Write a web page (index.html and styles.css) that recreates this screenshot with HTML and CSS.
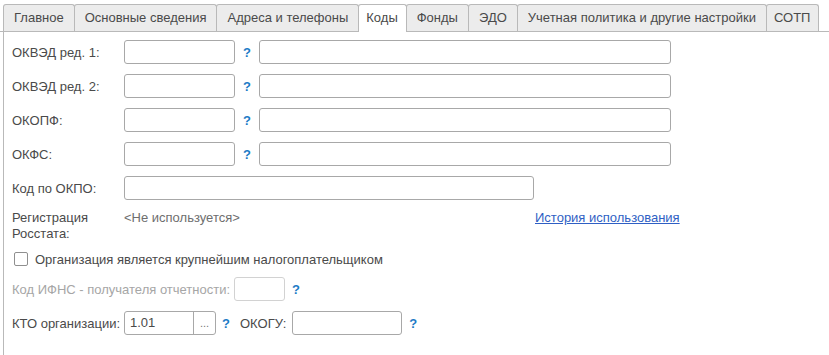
FILE: index.html
```html
<!DOCTYPE html>
<html>
<head>
<title>Коды организации</title>
<link rel="stylesheet" href="styles.css">
</head>
<body>

  <div class="tabs">
    <div class="tab">Главное</div>
    <div class="tab">Основные сведения</div>
    <div class="tab">Адреса и телефоны</div>
    <div class="tab active narrow">Коды</div>
    <div class="tab">Фонды</div>
    <div class="tab">ЭДО</div>
    <div class="tab">Учетная политика и другие настройки</div>
    <div class="tab narrow">СОТП</div>
  </div>

  <div class="panel">
    <div class="row">
      <label class="label">ОКВЭД ред. 1:</label>
      <input class="field short" type="text">
      <span class="help">?</span>
      <input class="field long" type="text">
    </div>
    <div class="row">
      <label class="label">ОКВЭД ред. 2:</label>
      <input class="field short" type="text">
      <span class="help">?</span>
      <input class="field long" type="text">
    </div>
    <div class="row">
      <label class="label">ОКОПФ:</label>
      <input class="field short" type="text">
      <span class="help">?</span>
      <input class="field long" type="text">
    </div>
    <div class="row">
      <label class="label">ОКФС:</label>
      <input class="field short" type="text">
      <span class="help">?</span>
      <input class="field long" type="text">
    </div>
    <div class="row">
      <label class="label">Код по ОКПО:</label>
      <input class="field okpo" type="text">
    </div>

    <div class="row reg-row">
      <div class="label">Регистрация<br>Росстата:</div>
      <div class="reg-value">&lt;Не используется&gt;</div>
      <a class="link" href="#">История использования</a>
    </div>

    <div class="row check-row">
      <span class="checkbox"></span>
      <span class="check-text">Организация является крупнейшим налогоплательщиком</span>
    </div>

    <div class="row">
      <label class="label disabled">Код ИФНС - получателя отчетности:</label>
      <input class="field ifns" type="text" disabled>
      <span class="help small">?</span>
    </div>

    <div class="row">
      <label class="label">КТО организации:</label>
      <div class="field kto">
        <span class="kto-value">1.01</span>
        <span class="kto-btn">...</span>
      </div>
      <span class="help kto-help">?</span>
      <label class="okogu-label">ОКОГУ:</label>
      <input class="field okogu" type="text">
      <span class="help small">?</span>
    </div>
  </div>

</body>
</html>
```

FILE: styles.css
```css
:root {
  --text-color: #4a4a4a;
  --muted-text: #a6a6a6;
  --tab-bg: #ececec;
  --tab-border: #b9b9b9;
  --field-border: #a8a8a8;
  --help-blue: #1d7bc6;
  --link-blue: #2f5fc4;
}

body {
  margin: 0;
  font-family: "Liberation Sans", Arial, sans-serif;
  font-size: 13px;
  color: var(--text-color);
  background: #ffffff;
  height: 355px;
  overflow: hidden;
}

/* Tab strip */
.tabs {
  display: flex;
  padding: 4px 0 0 3px;
  border-bottom: 1px solid var(--tab-border);
  height: 27px;
}

.tab {
  height: 26px;
  line-height: 26px;
  padding: 0 10px;
  background: var(--tab-bg);
  border: 1px solid var(--tab-border);
  border-bottom: none;
  border-radius: 3px 3px 0 0;
  margin-right: -1px;
  white-space: nowrap;
}

.tab.narrow {
  padding: 0 8px 0 7px;
}

.tab.active {
  background: #ffffff;
  height: 27px;
  position: relative;
  z-index: 1;
}

/* Panel body */
.panel {
  margin-left: 3px;
  border-left: 1px solid var(--tab-border);
  padding: 8px 0 0 8px;
  height: 315px;
}

.row {
  display: flex;
  align-items: center;
  height: 24px;
  margin-bottom: 10px;
}

.label {
  width: 112px;
  flex-shrink: 0;
}

.label.disabled {
  width: auto;
  color: var(--muted-text);
  margin-right: 4px;
}

.field {
  box-sizing: border-box;
  height: 24px;
  border: 1px solid var(--field-border);
  border-radius: 3px;
  background: #ffffff;
  margin: 0;
  padding: 0 5px;
  font: inherit;
  color: var(--text-color);
}

.field.short { width: 111px; }
.field.long { width: 412px; }
.field.okpo { width: 410px; }

.field.ifns {
  width: 51px;
  border-color: #d2d2d2;
}

.help {
  width: 24px;
  text-align: center;
  font-weight: 700;
  color: var(--help-blue);
}

.help.small {
  width: auto;
  margin-left: 7px;
}

/* Rosstat registration */
.reg-row {
  height: 32px;
  align-items: flex-start;
  line-height: 16px;
  margin-bottom: 8px;
}

.reg-value {
  width: 411px;
  color: #6e6e6e;
}

.link {
  color: var(--link-blue);
  text-decoration: underline;
}

/* Checkbox */
.check-row {
  height: 18px;
  margin-bottom: 9px;
}

.checkbox {
  box-sizing: border-box;
  width: 14px;
  height: 14px;
  border: 1px solid #8f8f8f;
  border-radius: 2px;
  margin: 0 7px 0 2px;
  background: #ffffff;
}

/* KTO / OKOGU */
.field.kto {
  width: 92px;
  display: flex;
  align-items: stretch;
  padding: 0;
}

.kto-value {
  flex: 1;
  padding-left: 5px;
  line-height: 22px;
}

.kto-btn {
  width: 21px;
  border-left: 1px solid var(--field-border);
  text-align: center;
  font-size: 11px;
  line-height: 22px;
  color: #777777;
}

.kto-help {
  width: 20px;
}

.okogu-label {
  margin: 0 6px 0 4px;
}

.field.okogu { width: 110px; }
```
